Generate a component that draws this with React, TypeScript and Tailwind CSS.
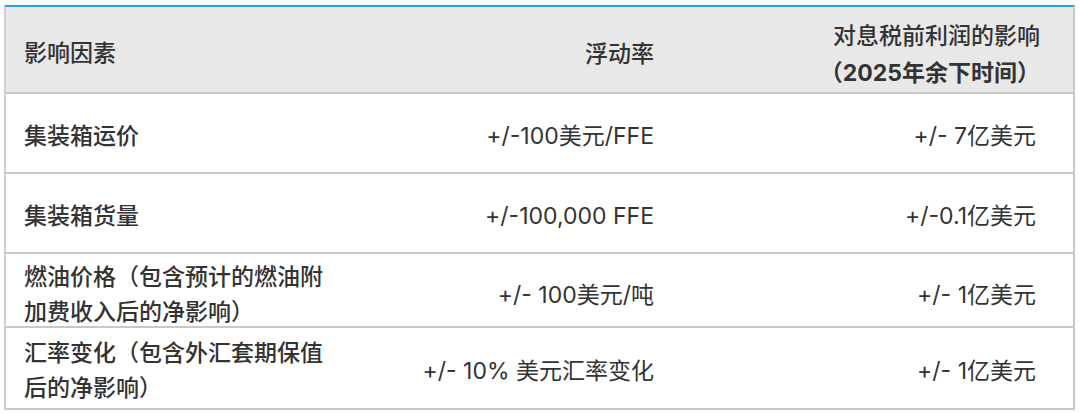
import * as React from 'react';

interface Row {
  factor: React.ReactNode;
  rate: string;
  impact: string;
  height: string;
}

const rows: Row[] = [
  { factor: '集装箱运价', rate: '+/-100美元/FFE', impact: '+/- 7亿美元', height: 'h-[80px]' },
  { factor: '集装箱货量', rate: '+/-100,000 FFE', impact: '+/-0.1亿美元', height: 'h-[80px]' },
  {
    factor: '燃油价格（包含预计的燃油附加费收入后的净影响）',
    rate: '+/- 100美元/吨',
    impact: '+/- 1亿美元',
    height: 'h-[74px]',
  },
  {
    factor: '汇率变化（包含外汇套期保值后的净影响）',
    rate: '+/- 10% 美元汇率变化',
    impact: '+/- 1亿美元',
    height: 'h-[80px]',
  },
];

const cols = 'grid grid-cols-[340px_345px_1fr]';

export default function App() {
  return (
    <div
      className="w-[1080px] h-[413px] bg-white pt-[5px] pl-[4px] text-[#333] text-[23px]"
      style={{ fontFamily: 'Inter, "Noto Sans CJK SC", sans-serif' }}
    >
      <div className="w-[1071px] border-t-2 border-t-[#1ea4e2] border-l-2 border-r-2 border-b-2 border-l-[#d0d0d0] border-r-[#c8c8c8] border-b-[#c8c8c8]">
        {/* header */}
        <div className={`${cols} h-[87px] bg-[#e8e8e8] border-b-2 border-[#c8c8c8] font-medium`}>
          <div className="flex items-center pl-[18px] pt-[8px]">影响因素</div>
          <div className="flex items-center justify-end pr-[37px] pt-[10px]">浮动率</div>
          <div className="flex flex-col items-end justify-center pr-[33px] pt-[10px] leading-[37px]">
            <span>对息税前利润的影响</span>
            <span className="font-bold">（2025年余下时间）</span>
          </div>
        </div>
        {rows.map((r, i) => (
          <div
            key={i}
            className={`${cols} ${r.height} pt-[6px] ${i < rows.length - 1 ? 'border-b-2 border-[#c8c8c8]' : ''}`}
          >
            <div className="flex items-center pl-[18px] pr-[14px] leading-[35px] font-medium">{r.factor}</div>
            <div className="flex items-center justify-end pr-[37px]">{r.rate}</div>
            <div className="flex items-center justify-end pr-[37px]">{r.impact}</div>
          </div>
        ))}
      </div>
    </div>
  );
}
